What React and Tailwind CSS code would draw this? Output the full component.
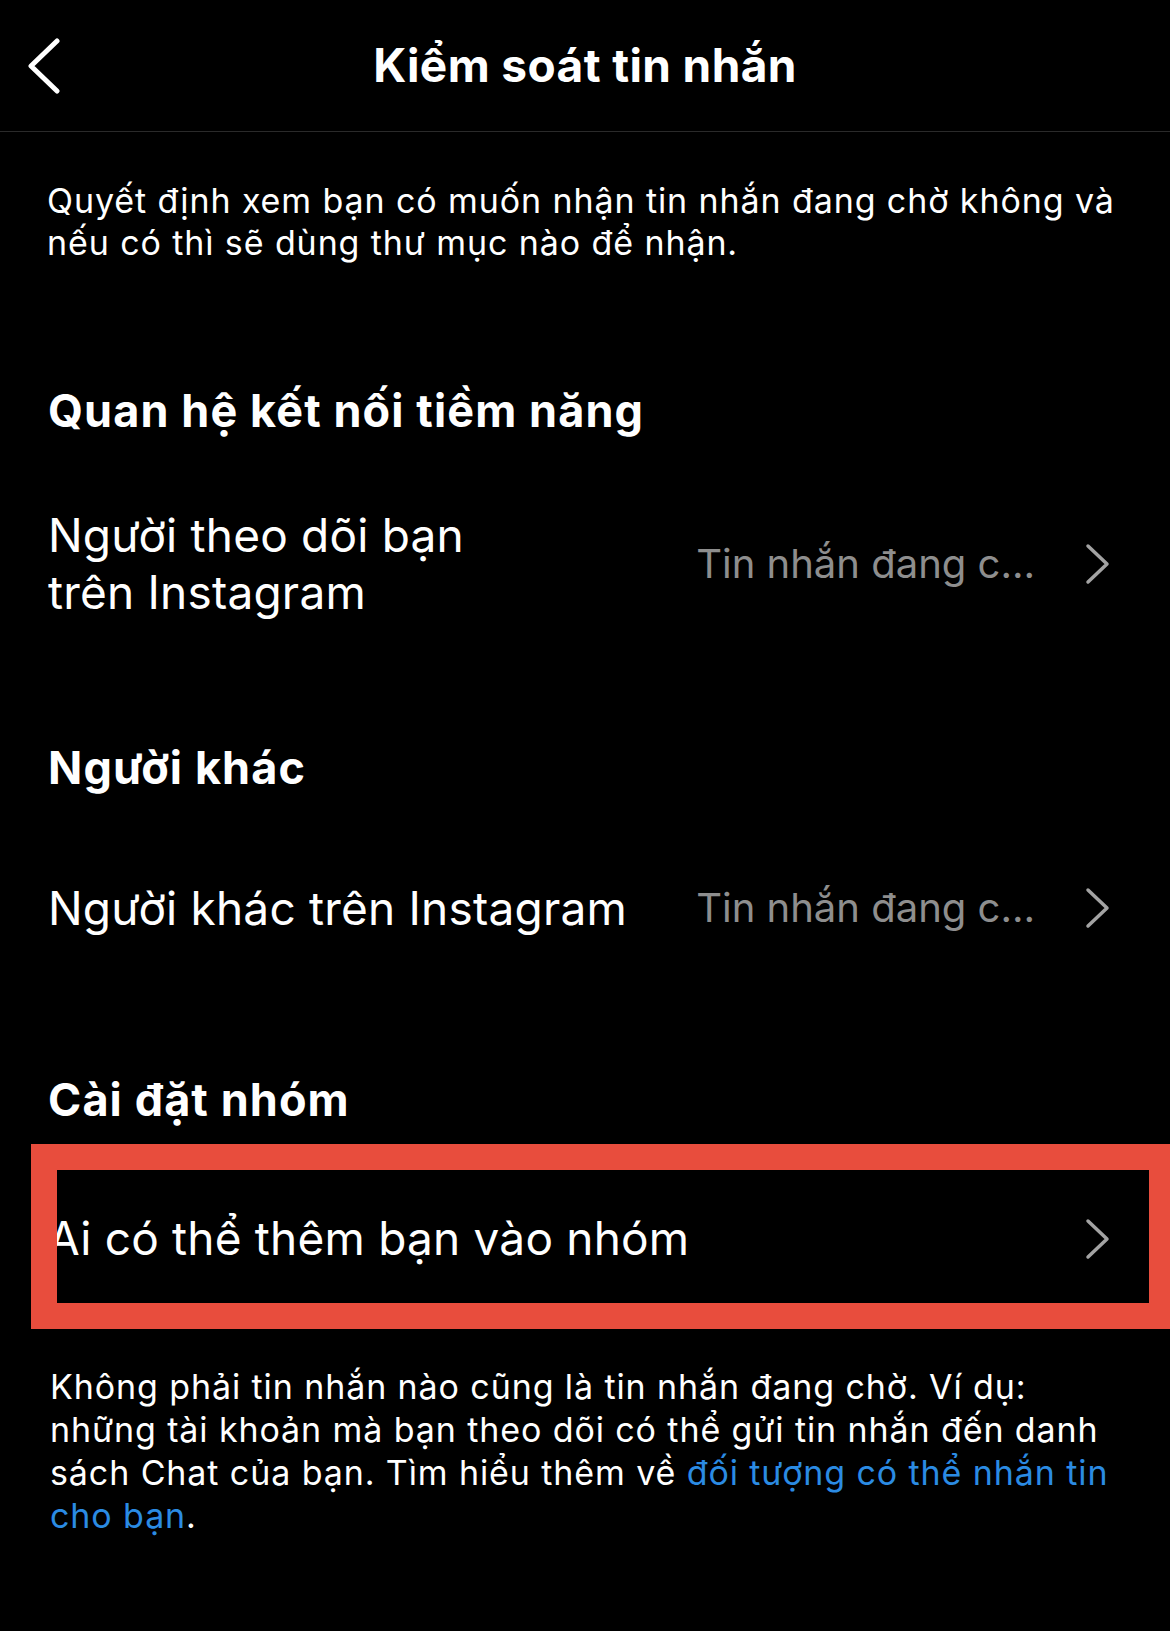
import React from 'react';

const font = { fontFamily: 'Inter, "Noto Sans", sans-serif' };

function BackIcon() {
  return (
    <svg width="34" height="56" viewBox="0 0 34 56" fill="none">
      <path d="M30 3 L4 28 L30 53" stroke="#fff" strokeWidth="5" strokeLinecap="round" strokeLinejoin="round" />
    </svg>
  );
}

function Chevron() {
  return (
    <svg width="26" height="42" viewBox="0 0 26 42" fill="none">
      <path d="M3 3 L22 21 L3 39" stroke="#a3a3a3" strokeWidth="3.5" strokeLinecap="round" strokeLinejoin="round" />
    </svg>
  );
}

function SectionTitle({ children, className = '' }) {
  return (
    <h2 className={`px-[48px] text-[45px] leading-[52px] font-bold tracking-[1.1px] text-white ${className}`}>{children}</h2>
  );
}

function SettingRow({ label, value, labelClass = '', className = '' }) {
  return (
    <div className={`flex items-center justify-between pl-[48px] pr-[59px] ${className}`}>
      <div className={`text-[46px] leading-[57px] tracking-[0.2px] text-white ${labelClass}`}>{label}</div>
      <div className="flex items-center gap-[50px]">
        {value && <span className="text-[40px] text-[#8e8e8e]">{value}</span>}
        <Chevron />
      </div>
    </div>
  );
}

export default function App() {
  return (
    <div className="min-h-screen w-full overflow-hidden bg-black pb-[80px]" style={font}>
      {/* header */}
      <header className="grid h-[132px] grid-cols-[1fr_auto_1fr] items-center border-b border-[#2a2a2a]">
        <button className="ml-[27px] flex items-center">
          <BackIcon />
        </button>
        <h1 className="text-[46px] font-bold tracking-[0.4px] text-white">Kiểm soát tin nhắn</h1>
        <div />
      </header>

      <p className="mt-[48px] px-[47px] text-[34px] leading-[42px] tracking-[0.9px] text-white">
        Quyết định xem bạn có muốn nhận tin nhắn đang chờ không và nếu có thì sẽ dùng thư mục nào để nhận.
      </p>

      <SectionTitle className="mt-[121px]">Quan hệ kết nối tiềm năng</SectionTitle>
      <SettingRow
        className="mt-[70px]"
        labelClass="max-w-[480px]"
        label="Người theo dõi bạn trên Instagram"
        value="Tin nhắn đang c…"
      />

      <SectionTitle className="mt-[121px]">Người khác</SectionTitle>
      <SettingRow className="mt-[84px]" label="Người khác trên Instagram" value="Tin nhắn đang c…" />

      <SectionTitle className="mt-[136px]">Cài đặt nhóm</SectionTitle>

      {/* group row, with the red frame drawn on top of it */}
      <div className="relative mt-[44px]">
        <SettingRow className="h-[133px] pt-[4px]" label="Ai có thể thêm bạn vào nhóm" />
        <div className="pointer-events-none absolute -top-[26px] -bottom-[26px] left-[31px] -right-[5px] border-[26px] border-[#e84d3d]" />
      </div>

      <p className="mt-[62px] px-[50px] text-[34px] leading-[43px] tracking-[0.9px] text-white">
        Không phải tin nhắn nào cũng là tin nhắn đang chờ. Ví dụ: những tài khoản mà bạn theo dõi có thể gửi tin nhắn đến danh sách Chat của bạn. Tìm hiểu thêm về{' '}
        <a className="text-[#2b8be3]">đối tượng có thể nhắn tin cho bạn</a>.
      </p>
    </div>
  );
}
